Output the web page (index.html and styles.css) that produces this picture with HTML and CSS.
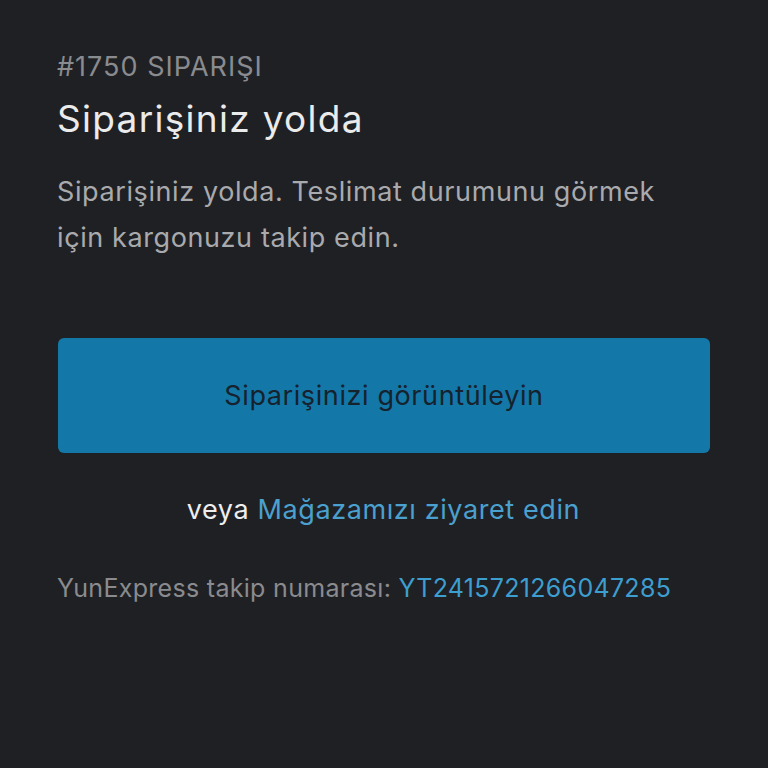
FILE: index.html
```html
<!DOCTYPE html>
<html lang="tr">
<head>
<meta charset="utf-8">
<link rel="stylesheet" href="styles.css">
</head>
<body>
<main class="card">
  <div class="label">#1750 SIPARIŞI</div>
  <h1 class="title">Siparişiniz yolda</h1>
  <p class="desc">Siparişiniz yolda. Teslimat durumunu görmek için kargonuzu takip edin.</p>
  <a class="btn">Siparişinizi görüntüleyin</a>
  <p class="alt">veya <a class="link">Mağazamızı ziyaret edin</a></p>
  <p class="track">YunExpress takip numarası: <a class="link">YT2415721266047285</a></p>
</main>
</body>
</html>
```
FILE: styles.css
```css
html, body {
  margin: 0;
  padding: 0;
  background: #1f2024;
  height: 100%;
}
body {
  font-family: Inter, Roboto, "Liberation Sans", sans-serif;
}
.card {
  padding: 50px 58px 0 57px;
  display: flex;
  flex-direction: column;
}
.label {
  font-size: 27px;
  line-height: 34px;
  letter-spacing: 1px;
  color: #8a8b8f;
}
.title {
  margin: 10px 0 0;
  font-size: 37px;
  line-height: 50px;
  letter-spacing: 1.3px;
  font-weight: 400;
  color: #ebebec;
}
.desc {
  margin: 25px 0 0;
  max-width: 630px;
  font-size: 27px;
  line-height: 46px;
  letter-spacing: 0.6px;
  color: #a9aaad;
}
.btn {
  margin-top: 77px;
  height: 115px;
  width: 652px;
  margin-left: 1px;
  background: #1378a8;
  border-radius: 6px;
  display: flex;
  align-items: center;
  justify-content: center;
  font-size: 27px;
  letter-spacing: 0.6px;
  color: #16222d;
}
.alt {
  margin: 37px 0 0;
  text-align: center;
  font-size: 27px;
  line-height: 40px;
  letter-spacing: 0.6px;
  color: #eeeeef;
}
.link {
  color: #4aa0cf;
}
.track {
  margin: 38px 0 0;
  font-size: 25px;
  line-height: 40px;
  letter-spacing: 0.3px;
  color: #8a8b8e;
}
.track .link {
  color: #3d9ed0;
}
```
